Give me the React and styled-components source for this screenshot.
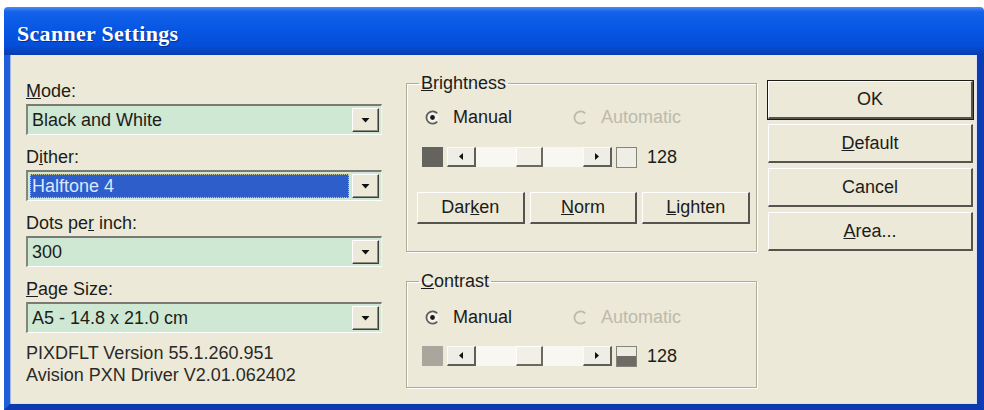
import React from "react";
import styled, { createGlobalStyle } from "styled-components";

const GlobalStyle = createGlobalStyle`
  html, body {
    margin: 0;
    padding: 0;
    background: #ffffff;
  }
  body {
    font-family: "Liberation Sans", Arial, sans-serif;
    color: #1c1c1a;
  }
`;

const Screen = styled.div`
  width: 984px;
  height: 410px;
  padding: 7px 0 0 4px;
  box-sizing: border-box;
  overflow: hidden;
`;

const Window = styled.div`
  width: 980px;
  height: 403px;
  display: flex;
  flex-direction: column;
`;

const TitleBar = styled.div`
  height: 48px;
  flex-shrink: 0;
  display: flex;
  align-items: center;
  padding: 6px 0 0 13px;
  box-sizing: border-box;
  border-radius: 4px 4px 0 0;
  background: linear-gradient(
    to bottom,
    #4a8cf4 0%,
    #1462ea 10%,
    #0757e4 45%,
    #044ed9 80%,
    #0a3caf 100%
  );
`;

const Title = styled.span`
  font-family: "Liberation Serif", "Times New Roman", serif;
  font-weight: bold;
  font-size: 22px;
  color: #ffffff;
  text-shadow: 1px 1px 0 #0a2f8a;
  letter-spacing: 0.3px;
`;

const Frame = styled.div`
  flex: 1;
  display: flex;
  background: #ece9d8;
  border-left: 6px solid #1f5ed8;
  border-right: 7px solid #0d3bb4;
  border-bottom: 6px solid #0d3aae;
  box-shadow: inset 1px 0 0 #9fb6e8, inset -1px -1px 0 #d7dff0;
`;

const Body = styled.div`
  flex: 1;
  display: flex;
  align-items: flex-start;
  padding: 18px 0 0 16px;
`;

const LeftColumn = styled.div`
  width: 360px;
  margin-top: 8px;
  display: flex;
  flex-direction: column;
`;

const Label = styled.div`
  font-size: 18px;
  line-height: 20px;
  height: 20px;
  margin-bottom: 3px;
  white-space: nowrap;
`;

const Combo = styled.div`
  width: 356px;
  height: 31px;
  margin-bottom: 12px;
  box-sizing: border-box;
  display: flex;
  align-items: stretch;
  padding: 2px;
  background: #cfe8d3;
  border-top: 2px solid #7b7a72;
  border-left: 2px solid #86857c;
  border-bottom: 1px solid #ffffff;
  border-right: 1px solid #f4f3ec;
`;

const ComboValue = styled.div`
  flex: 1;
  margin-right: 3px;
  display: flex;
  align-items: center;
  padding-left: 2px;
  font-size: 18px;
  white-space: nowrap;
  background: ${(p) => (p.$selected ? "#2d5ec9" : "transparent")};
  color: ${(p) => (p.$selected ? "#dbe6ff" : "#1c1c1a")};
  outline: ${(p) => (p.$selected ? "1px dotted #c9c49a" : "none")};
  outline-offset: -1px;
`;

const DropButton = styled.div`
  width: 27px;
  display: flex;
  align-items: center;
  justify-content: center;
  box-sizing: border-box;
  background: #ece9d8;
  border-top: 1px solid #ffffff;
  border-left: 1px solid #ffffff;
  border-right: 1px solid #3f3e3a;
  border-bottom: 1px solid #3f3e3a;
  box-shadow: inset -1px -1px 0 #8f8d82;
`;

const InfoLine = styled.div`
  font-size: 18px;
  line-height: 22px;
  white-space: nowrap;
  color: #2a2a27;
`;

const InfoBlock = styled.div`
  margin-top: -3px;
`;

const MiddleColumn = styled.div`
  width: 351px;
  margin-left: 20px;
  margin-top: 1px;
  display: flex;
  flex-direction: column;
  gap: 20px;
`;

const Group = styled.fieldset`
  margin: 0;
  min-width: 0;
  padding: 0 6px ${(p) => p.$bottom}px 10px;
  border: 1px solid #aeab9b;
  box-shadow: 1px 1px 0 #ffffff, inset 1px 1px 0 #ffffff;
  display: flex;
  flex-direction: column;
`;

const Legend = styled.legend`
  font-size: 18px;
  line-height: 18px;
  padding: 0 2px;
  margin-left: 2px;
`;

const RadioRow = styled.div`
  display: flex;
  align-items: center;
  height: 20px;
  margin-top: ${(p) => p.$top}px;
  margin-left: 8px;
`;

const RadioItem = styled.div`
  display: flex;
  align-items: center;
  gap: 13px;
  width: ${(p) => (p.$width ? `${p.$width}px` : "auto")};
  font-size: 18px;
  color: ${(p) => (p.$disabled ? "#bdbaad" : "#1c1c1a")};
`;

const SliderRow = styled.div`
  display: flex;
  align-items: center;
  height: 20px;
  margin-top: ${(p) => p.$top}px;
  margin-left: 5px;
`;

const Swatch = styled.div`
  width: 21px;
  height: 20px;
  box-sizing: border-box;
  background: ${(p) => p.$color};
`;

const ValueBox = styled.div`
  width: 21px;
  height: 21px;
  margin-left: 4px;
  box-sizing: border-box;
  border: 1px solid #85837a;
  background: ${(p) =>
    p.$half
      ? "linear-gradient(to bottom, #ecebe2 0%, #ecebe2 45%, #6c6b64 45%, #6c6b64 100%)"
      : "#efeee6"};
`;

const ValueText = styled.span`
  margin-left: 10px;
  font-size: 18px;
`;

const ScrollBar = styled.div`
  width: 165px;
  height: 20px;
  margin-left: 4px;
  display: flex;
`;

const ScrollButton = styled.div`
  width: 29px;
  height: 20px;
  box-sizing: border-box;
  display: flex;
  align-items: center;
  justify-content: center;
  background: #efeee6;
  border-top: 1px solid #fbfaf5;
  border-left: 1px solid #fbfaf5;
  border-right: 2px solid #5f5e58;
  border-bottom: 2px solid #5f5e58;
`;

const Track = styled.div`
  flex: 1;
  display: flex;
  justify-content: center;
  background: #f8f7f2;
`;

const Thumb = styled.div`
  width: 27px;
  height: 20px;
  box-sizing: border-box;
  background: #f1efe6;
  border-top: 1px solid #ffffff;
  border-left: 1px solid #ffffff;
  border-right: 2px solid #6a6962;
  border-bottom: 2px solid #6a6962;
`;

const ButtonRow = styled.div`
  display: flex;
  gap: 5px;
  margin-top: 25px;
`;

const Button = styled.div`
  flex: ${(p) => (p.$grow ? 1 : "none")};
  height: ${(p) => p.$height}px;
  box-sizing: border-box;
  display: flex;
  align-items: center;
  justify-content: center;
  font-size: 18px;
  background: #ece9d8;
  border-top: 1px solid #ffffff;
  border-left: 1px solid #ffffff;
  border-right: 2px solid #55544f;
  border-bottom: 2px solid #55544f;
  box-shadow: ${(p) => (p.$default ? "0 0 0 1px #1a1a18" : "none")};
  white-space: nowrap;
`;

const RightColumn = styled.div`
  width: 205px;
  margin-left: 11px;
  margin-top: 8px;
  display: flex;
  flex-direction: column;
  gap: 5px;
`;

const DownArrow = () => (
  <svg width="9" height="6" viewBox="0 0 9 6">
    <path d="M0.5 1 L8.5 1 L4.5 5.5 Z" fill="#111" />
  </svg>
);

const SideArrow = ({ dir }) => (
  <svg width="6" height="9" viewBox="0 0 6 9">
    {dir === "left" ? (
      <path d="M5 1 L5 8 L1 4.5 Z" fill="#111" />
    ) : (
      <path d="M1 1 L1 8 L5 4.5 Z" fill="#111" />
    )}
  </svg>
);

const Radio = ({ checked, disabled }) => (
  <svg width="15" height="15" viewBox="0 0 15 15">
    {!disabled && <circle cx="7.5" cy="7.5" r="6.2" fill="#f4f3ee" />}
    <path
      d="M12.2 3.3 A6.2 6.2 0 1 0 12.2 11.7"
      fill="none"
      stroke={disabled ? "#bcb9ad" : "#5e5d57"}
      strokeWidth="1.8"
    />
    {checked && <circle cx="7.5" cy="7.5" r="2.4" fill="#1a1a18" />}
  </svg>
);

const Select = ({ value, selected }) => (
  <Combo>
    <ComboValue $selected={selected}>{value}</ComboValue>
    <DropButton>
      <DownArrow />
    </DropButton>
  </Combo>
);

const Slider = ({ top, leftColor, half }) => (
  <SliderRow $top={top}>
    <Swatch $color={leftColor} />
    <ScrollBar>
      <ScrollButton>
        <SideArrow dir="left" />
      </ScrollButton>
      <Track>
        <Thumb />
      </Track>
      <ScrollButton>
        <SideArrow dir="right" />
      </ScrollButton>
    </ScrollBar>
    <ValueBox $half={half} />
    <ValueText>128</ValueText>
  </SliderRow>
);

const RadioChoice = ({ top }) => (
  <RadioRow $top={top}>
    <RadioItem $width={148}>
      <Radio checked />
      Manual
    </RadioItem>
    <RadioItem $disabled>
      <Radio disabled />
      Automatic
    </RadioItem>
  </RadioRow>
);

const App = () => {
  return (
    <>
      <GlobalStyle />
      <Screen>
        <Window>
          <TitleBar>
            <Title>Scanner Settings</Title>
          </TitleBar>
          <Frame>
            <Body>
              <LeftColumn>
                <Label>
                  <u>M</u>ode:
                </Label>
                <Select value="Black and White" />
                <Label>
                  D<u>i</u>ther:
                </Label>
                <Select value="Halftone 4" selected />
                <Label>
                  Dots pe<u>r</u> inch:
                </Label>
                <Select value="300" />
                <Label>
                  <u>P</u>age Size:
                </Label>
                <Select value="A5 - 14.8 x 21.0 cm" />
                <InfoBlock>
                  <InfoLine>PIXDFLT Version 55.1.260.951</InfoLine>
                  <InfoLine>Avision PXN Driver V2.01.062402</InfoLine>
                </InfoBlock>
              </LeftColumn>

              <MiddleColumn>
                <Group $bottom={27}>
                  <Legend>
                    <u>B</u>rightness
                  </Legend>
                  <RadioChoice top={15} />
                  <Slider top={20} leftColor="#64635d" />
                  <ButtonRow>
                    <Button $grow $height={32}>
                      Dar<u>k</u>en
                    </Button>
                    <Button $grow $height={32}>
                      <u>N</u>orm
                    </Button>
                    <Button $grow $height={32}>
                      <u>L</u>ighten
                    </Button>
                  </ButtonRow>
                </Group>
                <Group $bottom={21}>
                  <Legend>
                    <u>C</u>ontrast
                  </Legend>
                  <RadioChoice top={17} />
                  <Slider top={19} leftColor="#a9a79d" half />
                </Group>
              </MiddleColumn>

              <RightColumn>
                <Button $height={38} $default>
                  OK
                </Button>
                <Button $height={39}>
                  <u>D</u>efault
                </Button>
                <Button $height={39}>Cancel</Button>
                <Button $height={39}>
                  <u>A</u>rea...
                </Button>
              </RightColumn>
            </Body>
          </Frame>
        </Window>
      </Screen>
    </>
  );
};

export default App;
